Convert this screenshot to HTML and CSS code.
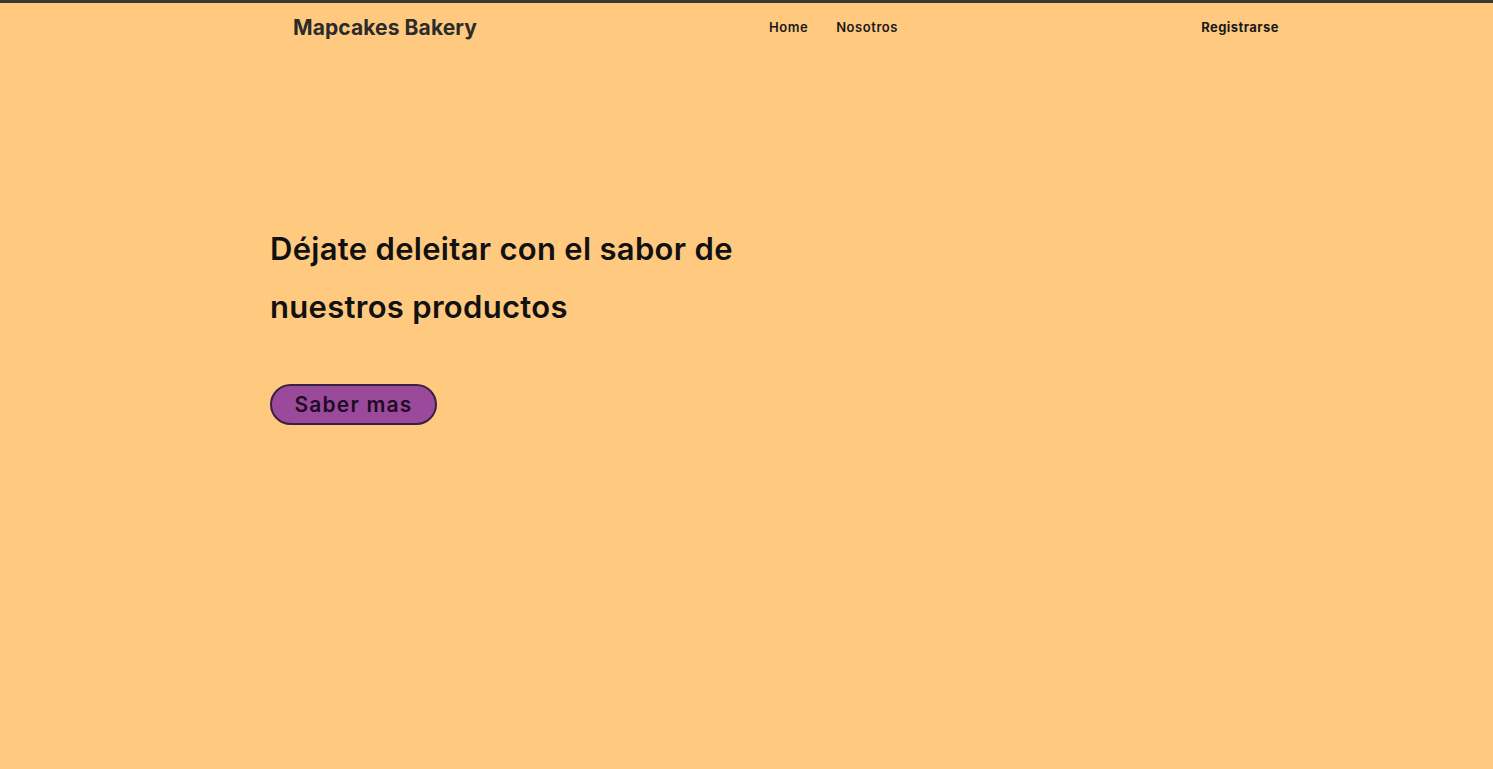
FILE: index.html
```html
<!DOCTYPE html>
<html lang="es">
<head>
<meta charset="utf-8">
<title>Mapcakes Bakery</title>
<link rel="stylesheet" href="styles.css">
</head>
<body>
<header class="topbar">
  <nav class="nav">
    <div class="brand">Mapcakes Bakery</div>
    <ul class="links">
      <li><a href="#">Home</a></li>
      <li><a href="#">Nosotros</a></li>
    </ul>
    <a class="register" href="#">Registrarse</a>
  </nav>
</header>
<main class="hero">
  <h1 class="title">Déjate deleitar con el sabor de nuestros productos</h1>
  <button class="cta">Saber mas</button>
</main>
</body>
</html>
```
FILE: styles.css
```css
* { box-sizing: border-box; }
html, body { margin: 0; padding: 0; }
body {
  background: #ffca80;
  font-family: "Inter", "Open Sans", sans-serif;
  color: #111;
  min-height: 769px;
  border-top: 3px solid #3a3a30;
}
.topbar { height: 50px; }
.nav {
  display: flex;
  align-items: center;
  height: 49px;
  padding-left: 293px;
  width: 1279px;
  padding-bottom: 1px;
}
.brand {
  width: 476px;
  font-size: 21px;
  font-weight: 700;
  color: #2b2b2b;
  letter-spacing: 0.1px;
  padding-top: 1px;
}
.links {
  display: flex;
  gap: 28px;
  list-style: none;
  margin: 0;
  padding: 0 0 2px;
}
.links a, .register {
  font-size: 13px;
  font-weight: 600;
  color: #1a1a1a;
  text-decoration: none;
  letter-spacing: 0.55px;
}
.register { margin-left: auto; font-weight: 700; letter-spacing: 0.45px; }
.hero {
  padding: 167px 0 0 270px;
}
.title {
  margin: 0;
  width: 520px;
  font-size: 31px;
  line-height: 58px;
  font-weight: 600;
  letter-spacing: 0.3px;
  color: #111;
}
.cta {
  margin-top: 48px;
  width: 167px;
  height: 41px;
  border-radius: 21px;
  background: #9b4a9b;
  border: 2px solid #3a2040;
  font-family: inherit;
  font-size: 21px;
  font-weight: 600;
  letter-spacing: 1.2px;
  color: #1e0b24;
  padding: 0;
  cursor: pointer;
}
```
